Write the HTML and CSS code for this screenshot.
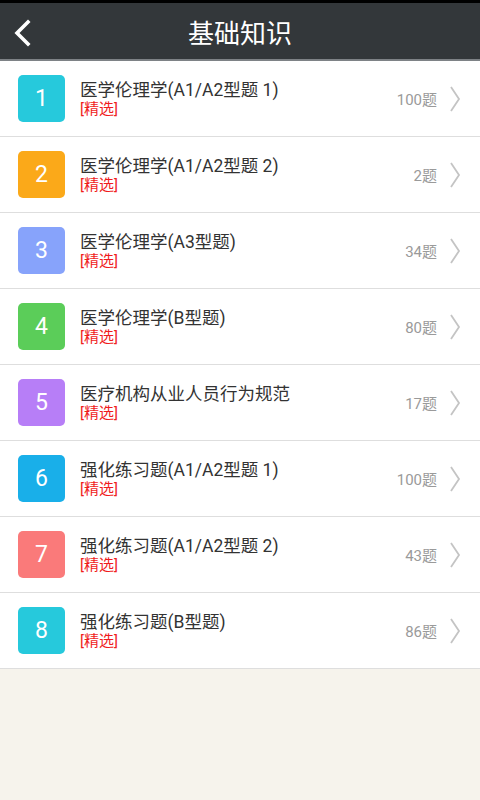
FILE: index.html
```html
<!DOCTYPE html>
<html lang="zh">
<head>
<meta charset="utf-8">
<link rel="stylesheet" href="styles.css">
</head>
<body>
<div class="statusbar"></div>
<header class="topbar">
  <svg class="back" width="20" height="28" viewBox="0 0 20 28"><path d="M15 3 L4 14 L15 25" fill="none" stroke="#fff" stroke-width="3.6" stroke-linecap="square"/></svg>
  <h1 class="title">基础知识</h1>
</header>
<ul class="list">
  <li class="row"><span class="num c1">1</span><div class="text"><div class="name">医学伦理学(A1/A2型题 1)</div><div class="tag">[精选]</div></div><span class="count">100题</span><svg class="chev" width="12" height="28" viewBox="0 0 12 28"><path d="M2 2 L10 14 L2 26" fill="none" stroke="#c4c4c4" stroke-width="1.8"/></svg></li>
  <li class="row"><span class="num c2">2</span><div class="text"><div class="name">医学伦理学(A1/A2型题 2)</div><div class="tag">[精选]</div></div><span class="count">2题</span><svg class="chev" width="12" height="28" viewBox="0 0 12 28"><path d="M2 2 L10 14 L2 26" fill="none" stroke="#c4c4c4" stroke-width="1.8"/></svg></li>
  <li class="row"><span class="num c3">3</span><div class="text"><div class="name">医学伦理学(A3型题)</div><div class="tag">[精选]</div></div><span class="count">34题</span><svg class="chev" width="12" height="28" viewBox="0 0 12 28"><path d="M2 2 L10 14 L2 26" fill="none" stroke="#c4c4c4" stroke-width="1.8"/></svg></li>
  <li class="row"><span class="num c4">4</span><div class="text"><div class="name">医学伦理学(B型题)</div><div class="tag">[精选]</div></div><span class="count">80题</span><svg class="chev" width="12" height="28" viewBox="0 0 12 28"><path d="M2 2 L10 14 L2 26" fill="none" stroke="#c4c4c4" stroke-width="1.8"/></svg></li>
  <li class="row"><span class="num c5">5</span><div class="text"><div class="name">医疗机构从业人员行为规范</div><div class="tag">[精选]</div></div><span class="count">17题</span><svg class="chev" width="12" height="28" viewBox="0 0 12 28"><path d="M2 2 L10 14 L2 26" fill="none" stroke="#c4c4c4" stroke-width="1.8"/></svg></li>
  <li class="row"><span class="num c6">6</span><div class="text"><div class="name">强化练习题(A1/A2型题 1)</div><div class="tag">[精选]</div></div><span class="count">100题</span><svg class="chev" width="12" height="28" viewBox="0 0 12 28"><path d="M2 2 L10 14 L2 26" fill="none" stroke="#c4c4c4" stroke-width="1.8"/></svg></li>
  <li class="row"><span class="num c7">7</span><div class="text"><div class="name">强化练习题(A1/A2型题 2)</div><div class="tag">[精选]</div></div><span class="count">43题</span><svg class="chev" width="12" height="28" viewBox="0 0 12 28"><path d="M2 2 L10 14 L2 26" fill="none" stroke="#c4c4c4" stroke-width="1.8"/></svg></li>
  <li class="row"><span class="num c8">8</span><div class="text"><div class="name">强化练习题(B型题)</div><div class="tag">[精选]</div></div><span class="count">86题</span><svg class="chev" width="12" height="28" viewBox="0 0 12 28"><path d="M2 2 L10 14 L2 26" fill="none" stroke="#c4c4c4" stroke-width="1.8"/></svg></li>
</ul>
</body>
</html>
```
FILE: styles.css
```css
* { box-sizing: border-box; }
html, body {
  margin: 0;
  padding: 0;
  background: #f6f3ec;
  font-family: Roboto, "Noto Sans CJK SC", sans-serif;
}
.statusbar {
  height: 3px;
  background: #000;
}
.topbar {
  height: 58px;
  background: #33373a;
  border-bottom: 2px solid #7e8286;
  display: flex;
  align-items: center;
  justify-content: center;
  position: relative;
}
.back {
  position: absolute;
  left: 13px;
  top: 16px;
}
.title {
  margin: 0;
  color: #fff;
  font-size: 26px;
  font-weight: normal;
  letter-spacing: 0;
}
.list {
  list-style: none;
  margin: 0;
  padding: 0;
  background: #fff;
}
.row {
  height: 76px;
  display: flex;
  align-items: center;
  padding: 0 19px 0 18px;
  border-bottom: 1px solid #dedede;
}
.num {
  width: 47px;
  height: 47px;
  border-radius: 5px;
  color: #fff;
  font-size: 23px;
  display: flex;
  align-items: center;
  justify-content: center;
  flex: none;
}
.c1 { background: #26c9dc; }
.c2 { background: #fba919; }
.c3 { background: #87a3fb; }
.c4 { background: #5bcd59; }
.c5 { background: #b77ef7; }
.c6 { background: #19afe9; }
.c7 { background: #fa7a7a; }
.c8 { background: #26c9dc; }
.text {
  flex: 1;
  margin-left: 15px;
  margin-top: -1px;
}
.name {
  font-size: 17.5px;
  color: #333;
  line-height: 22px;
}
.tag {
  font-size: 15px;
  color: #f01c1c;
  line-height: 17px;
}
.count {
  font-size: 15px;
  color: #9a9a9a;
  margin-right: 12px;
}
.chev {
  flex: none;
}
```
